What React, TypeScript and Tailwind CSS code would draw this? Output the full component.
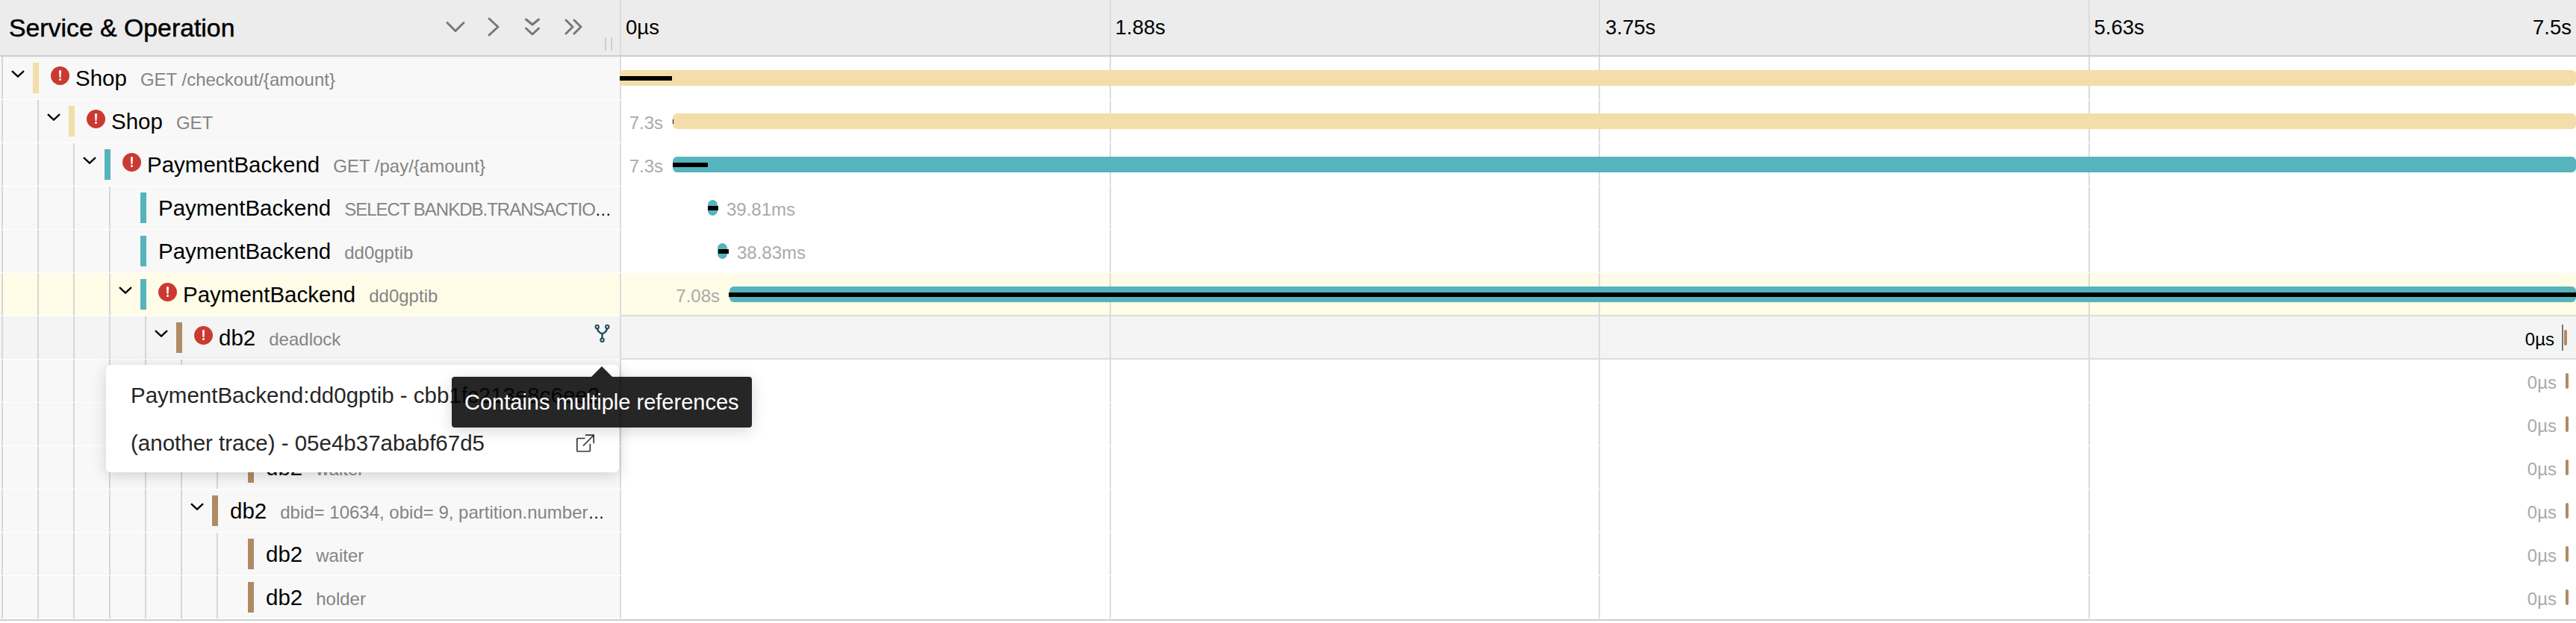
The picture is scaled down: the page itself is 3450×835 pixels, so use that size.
import React from "react";

type Row = {
  lvl: number;
  color: string;
  name: string;
  sub: string;
  err?: boolean;
  kids?: boolean;
  bar: [number, number];
  black?: [number, number];
  label?: string;
  labelX?: number;
  labelSide?: "l" | "r";
  kind?: "sel" | "hover";
  refs?: boolean;
  tight?: boolean;
};

const YEL = "#f3dda8";
const TEAL = "#56b4bc";
const BRN = "#b08a63";
const SUB = "dbid= 10634, obid= 9, partition.number= 72057594046709760, lock mode= X";

const tail = (lvl: number): Partial<Row> => ({ bar: [3436, 4], label: "0µs", labelX: 3424, labelSide: "l", lvl });

const rows: Row[] = [
  { lvl: 0, color: YEL, name: "Shop", sub: "GET /checkout/{amount}", err: true, kids: true, bar: [830, 2620], black: [830, 70] },
  { lvl: 1, color: YEL, name: "Shop", sub: "GET", err: true, kids: true, bar: [901, 2549], black: [901, 1], label: "7.3s", labelX: 888, labelSide: "l" },
  { lvl: 2, color: TEAL, name: "PaymentBackend", sub: "GET /pay/{amount}", err: true, kids: true, bar: [901, 2549], black: [901, 47], label: "7.3s", labelX: 888, labelSide: "l" },
  { lvl: 3, color: TEAL, name: "PaymentBackend", sub: "SELECT BANKDB.TRANSACTIONS WHERE ID = ?", tight: true, bar: [948, 13], black: [948, 14], label: "39.81ms", labelX: 973, labelSide: "r" },
  { lvl: 3, color: TEAL, name: "PaymentBackend", sub: "dd0gptib", bar: [961, 13], black: [962, 14], label: "38.83ms", labelX: 987, labelSide: "r" },
  { lvl: 3, color: TEAL, name: "PaymentBackend", sub: "dd0gptib", err: true, kids: true, bar: [977, 2473], black: [976, 2474], label: "7.08s", labelX: 964, labelSide: "l", kind: "sel" },
  { lvl: 4, color: BRN, name: "db2", sub: "deadlock", err: true, kids: true, bar: [3434, 4], label: "0µs", labelX: 3421, labelSide: "l", kind: "hover", refs: true },
  { ...tail(5), color: BRN, name: "db2", sub: SUB, kids: true } as Row,
  { ...tail(6), color: BRN, name: "db2", sub: "holder" } as Row,
  { ...tail(6), color: BRN, name: "db2", sub: "waiter" } as Row,
  { ...tail(5), color: BRN, name: "db2", sub: SUB, kids: true } as Row,
  { ...tail(6), color: BRN, name: "db2", sub: "waiter" } as Row,
  { ...tail(6), color: BRN, name: "db2", sub: "holder" } as Row,
];

function ErrorIcon() {
  return (
    <svg viewBox="0 0 25 25" className="w-[25px] h-[25px] shrink-0 mt-[13px] mr-[8px]">
      <circle cx="12.5" cy="12.5" r="12.5" fill="#cb3a31" />
      <path d="M11 6.6a1.5 1.5 0 0 1 3 0l-.5 7.6a1 1 0 0 1-2 0z" fill="#fff" />
      <circle cx="12.5" cy="17.6" r="1.5" fill="#fff" />
    </svg>
  );
}

function Chevron() {
  return (
    <svg viewBox="0 0 18 10" className="w-[18px] h-[10px] mt-[18px] ml-[11px]" fill="none" stroke="#000" strokeWidth="2.4">
      <path d="M1 1.2l8 7.4 8-7.4" />
    </svg>
  );
}

function RefsIcon() {
  return (
    <svg viewBox="0 0 21 24" className="w-[21px] h-[24px] shrink-0 mt-[11px] mr-[13px] ml-[4px]" fill="none" stroke="#1d4b5b" strokeWidth="2">
      <circle cx="3.7" cy="3" r="2.2" />
      <circle cx="17.3" cy="3" r="2.2" />
      <circle cx="10.5" cy="20.8" r="2.2" />
      <path d="M3.9 5.2Q4.6 10.5 10.5 12.4Q16.4 10.5 17.1 5.2M10.5 12.4V18.6" strokeWidth="2.4" />
    </svg>
  );
}

function ExternalIcon() {
  return (
    <svg viewBox="0 0 24 24" className="w-[24px] h-[24px] shrink-0" fill="none" stroke="#333" strokeWidth="1.7">
      <path d="M11.5 5.5H2a1.2 1.2 0 0 0-1.2 1.2v15.1A1.2 1.2 0 0 0 2 23h15.1a1.2 1.2 0 0 0 1.2-1.2V13" />
      <path d="M9 15.5L23 1.5M12 1.2h11.2v11" />
    </svg>
  );
}

function Grid() {
  return (
    <div className="flex h-full">
      <div className="w-[655.5px] shrink-0 border-l-2 border-[#dcdcdc]" />
      <div className="w-[655.5px] shrink-0 border-l-2 border-[#dcdcdc]" />
      <div className="w-[655.5px] shrink-0 border-l-2 border-[#dcdcdc]" />
      <div className="flex-1 border-l-2 border-[#dcdcdc]" />
    </div>
  );
}

function TreeCell({ r }: { r: Row }) {
  const bg = r.kind === "sel" ? "bg-[#fffce8]" : r.kind === "hover" ? "bg-[#f4f4f4]" : "bg-[#f8f8f8]";
  const guides = Array.from({ length: r.lvl });
  return (
    <div className={`w-[830px] shrink-0 h-full flex pl-[2px] ${bg}`}>
      {guides.map((_, i) => (
        <div key={i} className="w-[48px] shrink-0 h-full border-l-2 border-[#d6d6d6]" />
      ))}
      <div className="w-[42px] shrink-0 h-full border-l-2 border-[#d6d6d6]">{r.kids && <Chevron />}</div>
      <div className="w-[8px] h-[41px] mt-[8px] shrink-0" style={{ backgroundColor: r.color }} />
      <div className="ml-[16px] flex min-w-0 flex-1">
        {r.err && <ErrorIcon />}
        <div className="flex-1 min-w-0 truncate text-[22px] leading-[41px] mt-[8px] text-black mr-[7px]">
          <span className="text-[29.5px]">{r.name}</span>
          <span className={`text-[24px] text-[#848484] ml-[18px] ${r.tight ? "tracking-[-1px]" : ""}`}>{r.sub}</span>
        </div>
      </div>
      {r.refs && <RefsIcon />}
    </div>
  );
}

function TimeCell({ r }: { r: Row }) {
  const bg = r.kind === "sel" ? "bg-[#fffce8]" : r.kind === "hover" ? "bg-[#f4f4f4]" : "bg-white";
  const rad = r.bar[1] < 10 ? "rounded-[3px]" : r.bar[1] < 20 ? "rounded-[7px]" : "rounded-[6px]";
  return (
    <div className={`relative flex-1 h-full ${bg}`}>
      <Grid />
      <div
        className={`absolute top-[18px] h-[21px] ${rad}`}
        style={{ left: r.bar[0] - 830, width: r.bar[1], backgroundColor: r.color }}
      />
      {r.black && (
        <div className="absolute top-[26px] h-[6px] bg-black" style={{ left: r.black[0] - 830, width: r.black[1] }} />
      )}
      {r.label && (
        <span
          className={`absolute top-[15px] text-[24px] leading-[32px] ${r.kind === "hover" ? "text-black" : "text-[#aaaaaa]"}`}
          style={
            r.labelSide === "l"
              ? { right: 2620 - (r.labelX! - 830) }
              : { left: r.labelX! - 830 }
          }
        >
          {r.label}
        </span>
      )}
      {r.kind === "hover" && <div className="absolute top-[11px] h-[35px] w-[2px] bg-[#777777]" style={{ left: 3431 - 830 }} />}
      {r.kind === "hover" && <div className="absolute inset-x-0 top-[-2px] h-[2px] bg-[#dddddd]" />}
      {r.kind === "hover" && <div className="absolute inset-x-0 bottom-[-1px] h-[2px] bg-[#dddddd]" />}
    </div>
  );
}

function HeaderIcons() {
  const cls = "w-[32px] h-[32px] shrink-0";
  return (
    <div className="flex items-center mt-[-2px]">
      <svg viewBox="0 0 32 32" className={cls} fill="none" stroke="#777" strokeWidth="3" strokeLinecap="round" strokeLinejoin="round">
        <path d="M5 10.5l11 11 11-11" />
      </svg>
      <svg viewBox="0 0 32 32" className={`${cls} ml-[19px]`} fill="none" stroke="#777" strokeWidth="3" strokeLinecap="round" strokeLinejoin="round">
        <path d="M10 5l12 11-12 11" />
      </svg>
      <svg viewBox="0 0 32 32" className={`${cls} ml-[20px]`} fill="none" stroke="#777" strokeWidth="3" strokeLinecap="round" strokeLinejoin="round">
        <path d="M7.5 6l8.5 7 8.5-7M7.5 18l8.5 8 8.5-8" />
      </svg>
      <svg viewBox="0 0 32 32" className={`${cls} ml-[23px]`} fill="none" stroke="#777" strokeWidth="3" strokeLinecap="round" strokeLinejoin="round">
        <path d="M6 7l9 9-9 9M17 7l9 9-9 9" />
      </svg>
    </div>
  );
}

export default function App() {
  return (
    <div className="relative w-[3450px] font-['Liberation_Sans',sans-serif] bg-white">
      {/* header */}
      <div className="flex h-[76px] bg-[#ececec] border-b-2 border-[#cccccc]">
        <div className="relative w-[830px] shrink-0 flex items-center pl-[12px] pr-[46px]">
          <span className="text-[33.8px] text-black flex-1 [-webkit-text-stroke:0.5px_#000]">Service &amp; Operation</span>
          <HeaderIcons />
          <div className="absolute right-[10px] bottom-[6px] h-[18px] w-[10px] border-x-2 border-[#cfcfcf]" />
        </div>
        <div className="flex flex-1 text-[27.5px] text-black">
          <div className="w-[655.5px] shrink-0 border-l-2 border-[#dcdcdc] pl-[6px] leading-[74px]">0µs</div>
          <div className="w-[655.5px] shrink-0 border-l-2 border-[#dcdcdc] pl-[6px] leading-[74px]">1.88s</div>
          <div className="w-[655.5px] shrink-0 border-l-2 border-[#dcdcdc] pl-[7px] leading-[74px]">3.75s</div>
          <div className="flex-1 border-l-2 border-[#dcdcdc] pl-[6px] pr-[6px] leading-[74px] flex justify-between">
            <span>5.63s</span>
            <span>7.5s</span>
          </div>
        </div>
      </div>

      {/* rows */}
      {rows.map((r, i) => (
        <div key={i} className="flex h-[58px] border-b border-white">
          <TreeCell r={r} />
          <TimeCell r={r} />
        </div>
      ))}
      <div className="h-[2px] bg-[#cccccc]" />

      {/* references popover */}
      <div className="absolute left-[142px] top-[489px] w-[687px] pt-[9px] pb-[7px] bg-white rounded-[6px] shadow-[0_4px_20px_rgba(0,0,0,0.16)] text-[29.5px] text-[#262626]">
        <div className="h-[64px] flex items-center pl-[33px] pr-[33px] whitespace-nowrap">
          <span>PaymentBackend:dd0gptib - cbb1fc213e8c6ee2</span>
        </div>
        <div className="h-[64px] flex items-center justify-between pl-[33px] pr-[33px] whitespace-nowrap">
          <span>(another trace) - 05e4b37ababf67d5</span>
          <ExternalIcon />
        </div>
      </div>

      {/* tooltip */}
      <div className="absolute left-[605px] top-[505px] w-[402px] h-[68px] pt-[2px] rounded-[4px] bg-[rgba(0,0,0,0.85)] shadow-[0_4px_20px_rgba(0,0,0,0.16)] flex items-center pl-[17px] text-[29px] text-white whitespace-nowrap">
        <div className="absolute left-[187px] top-[-14px] w-0 h-0 border-x-[14px] border-b-[14px] border-x-transparent border-b-[rgba(0,0,0,0.85)]" />
        Contains multiple references
      </div>
    </div>
  );
}
